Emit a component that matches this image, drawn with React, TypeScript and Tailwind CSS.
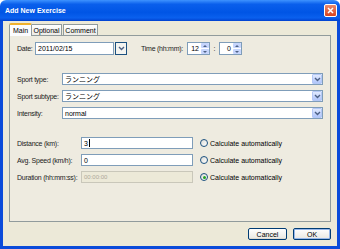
import React from 'react';

const Chevron = () => (
    <svg width="7" height="5" viewBox="0 0 7 5">
        <path d="M1 1 L3.5 3.5 L6 1" fill="none" stroke="#4D6185" strokeWidth="1.4" />
    </svg>
);

const DropButton = ({ cls }: { cls: string }) => (
    <div className={`flex shrink-0 items-center justify-center border border-[#B4C8F6] bg-[linear-gradient(180deg,#E1EAFE_0%,#C3D3FD_60%,#B1C6FA_100%)] rounded-[1px] ${cls}`}>
        <Chevron />
    </div>
);

const Select = ({ value }: { value: string }) => (
    <div className="flex h-[12px] w-[261px] shrink-0 items-center border border-[#7F9DB9] bg-white pl-[2px]">
        <span className="flex-1 whitespace-nowrap text-[7px] leading-none">{value}</span>
        <DropButton cls="h-[10px] w-[10px]" />
    </div>
);

const Spinner = ({ value }: { value: string }) => (
    <div className="flex h-[13px] w-[23px] shrink-0 items-center border border-[#7F9DB9] bg-white">
        <span className="flex-1 pr-[2px] text-right text-[7px] leading-none">{value}</span>
        <div className="flex h-[11px] w-[8px] flex-col gap-[1px]">
            <div className="flex flex-1 items-center justify-center rounded-[1px] bg-[#C6D5FC]">
                <svg width="4" height="2" viewBox="0 0 4 2"><path d="M0 2 L2 0 L4 2Z" fill="#4D6185" /></svg>
            </div>
            <div className="flex flex-1 items-center justify-center rounded-[1px] bg-[#C6D5FC]">
                <svg width="4" height="2" viewBox="0 0 4 2"><path d="M0 0 L2 2 L4 0Z" fill="#4D6185" /></svg>
            </div>
        </div>
    </div>
);

const Radio = ({ checked }: { checked?: boolean }) => (
    <div className="ml-[7px] flex items-center gap-[2px]">
        <div className="flex h-[8px] w-[8px] items-center justify-center rounded-full border border-[#1C5180] bg-[linear-gradient(135deg,#DCDCD7,#FFFFFF)]">
            {checked && <div className="h-[3px] w-[3px] rounded-full bg-[#21A121]" />}
        </div>
        <span className="whitespace-nowrap text-[7px] leading-none">Calculate automatically</span>
    </div>
);

const Label = ({ w, children }: { w: string; children: React.ReactNode }) => (
    <span className={`shrink-0 whitespace-nowrap text-[7px] leading-none tracking-[-0.25px] text-[#222] ${w}`}>{children}</span>
);

export default function App() {
    return (
        <div className="flex h-[249px] w-[340px] flex-col font-['Liberation_Sans','Noto_Sans_CJK_JP',sans-serif] text-black">
            {/* title bar */}
            <div className="flex h-[21px] items-center justify-between rounded-t-[6px] bg-[linear-gradient(180deg,#3E93FF_0%,#0A5FEC_20%,#0055E5_60%,#0A60EE_85%,#0041CF_100%)] pl-[5px] pr-[3px]">
                <span className="text-[7px] font-bold leading-none text-white">Add New Exercise</span>
                <div className="flex h-[13px] w-[13px] items-center justify-center rounded-[2px] border border-white bg-[linear-gradient(180deg,#E98A6E,#D8431E)]">
                    <svg width="7" height="7" viewBox="0 0 7 7">
                        <path d="M1 1 L6 6 M6 1 L1 6" stroke="white" strokeWidth="1.5" />
                    </svg>
                </div>
            </div>

            {/* body */}
            <div className="flex flex-1 flex-col border-x-[3px] border-b-[3px] border-[#0B4BDA] bg-[#ECE9D8] px-[6px] pt-[2px]">
                <div className="flex h-[12px] items-end">
                    <div className="z-10 -mb-[1px] flex h-[13px] w-[23px] items-center justify-center rounded-t-[2px] border-x border-[#919B9C] border-t-2 border-t-[#F0B12D] bg-[#FCFCFE] text-[7px] leading-none">Main</div>
                    <div className="flex h-[11px] w-[30px] items-center justify-center border-r border-t border-[#919B9C] bg-[linear-gradient(180deg,#FFFFFF,#ECEBE6)] text-[7px] leading-none">Optional</div>
                    <div className="ml-[1px] flex h-[11px] w-[35px] items-center justify-center border-x border-t border-[#919B9C] bg-[linear-gradient(180deg,#FFFFFF,#ECEBE6)] text-[7px] leading-none">Comment</div>
                </div>

                <div className="flex h-[187px] flex-col border border-[#919B9C] bg-[#EEEBE0] pl-[7px] pt-[6px]">
                    <div className="flex h-[13px] items-center">
                        <Label w="w-[18px]">Date:</Label>
                        <div className="flex h-[13px] w-[79px] shrink-0 items-center border border-[#7F9DB9] bg-white pl-[2px] text-[7px] leading-none">2011/02/15</div>
                        <div className="ml-[1px] flex h-[13px] w-[12px] shrink-0 items-center justify-center border border-[#1C5180] bg-[#F4F4F0]">
                            <Chevron />
                        </div>
                        <span className="ml-[14px]" />
                        <Label w="w-[46px]">Time (hh:mm):</Label>
                        <Spinner value="12" />
                        <span className="w-[9px] text-center text-[7px] leading-none">:</span>
                        <Spinner value="0" />
                    </div>

                    <div className="mt-[18px] flex flex-col gap-[5px]">
                        {[['Sport type:', 'ランニング'], ['Sport subtype:', 'ランニング'], ['Intensity:', 'normal']].map(([label, value]) => (
                            <div key={label} className="flex items-center">
                                <Label w="w-[45px]">{label}</Label>
                                <Select value={value} />
                            </div>
                        ))}
                    </div>

                    <div className="mt-[18px] flex flex-col gap-[5px]">
                        <div className="flex items-center">
                            <Label w="w-[64px]">Distance (km):</Label>
                            <div className="flex h-[12px] w-[112px] shrink-0 items-center border border-[#7F9DB9] bg-white pl-[2px] text-[7px] leading-none">
                                3<span className="ml-[1px] h-[8px] w-[1px] bg-black" />
                            </div>
                            <Radio />
                        </div>
                        <div className="flex items-center">
                            <Label w="w-[64px]">Avg. Speed (km/h):</Label>
                            <div className="flex h-[12px] w-[112px] shrink-0 items-center border border-[#7F9DB9] bg-white pl-[2px] text-[7px] leading-none">0</div>
                            <Radio />
                        </div>
                        <div className="flex items-center">
                            <Label w="w-[64px]">Duration (hh:mm:ss):</Label>
                            <div className="flex h-[12px] w-[112px] shrink-0 items-center border border-[#C9C7BA] bg-[#ECE9D8] pl-[2px] text-[6px] leading-none text-[#ACA899]">00:00:00</div>
                            <Radio checked />
                        </div>
                    </div>
                </div>

                <div className="mt-[6px] flex justify-end gap-[6px]">
                    <div className="flex h-[12px] w-[39px] items-center justify-center rounded-[2px] border border-[#003C74] bg-[linear-gradient(180deg,#FFFFFF,#ECEBE6_85%,#D6D0C5)] text-[7px] leading-none">Cancel</div>
                    <div className="flex h-[12px] w-[38px] items-center justify-center rounded-[2px] border border-[#003C74] bg-[linear-gradient(180deg,#FFFFFF,#ECEBE6_85%,#D6D0C5)] text-[7px] leading-none shadow-[inset_0_0_0_1px_#98B8EA]">OK</div>
                </div>
            </div>
        </div>
    );
}
